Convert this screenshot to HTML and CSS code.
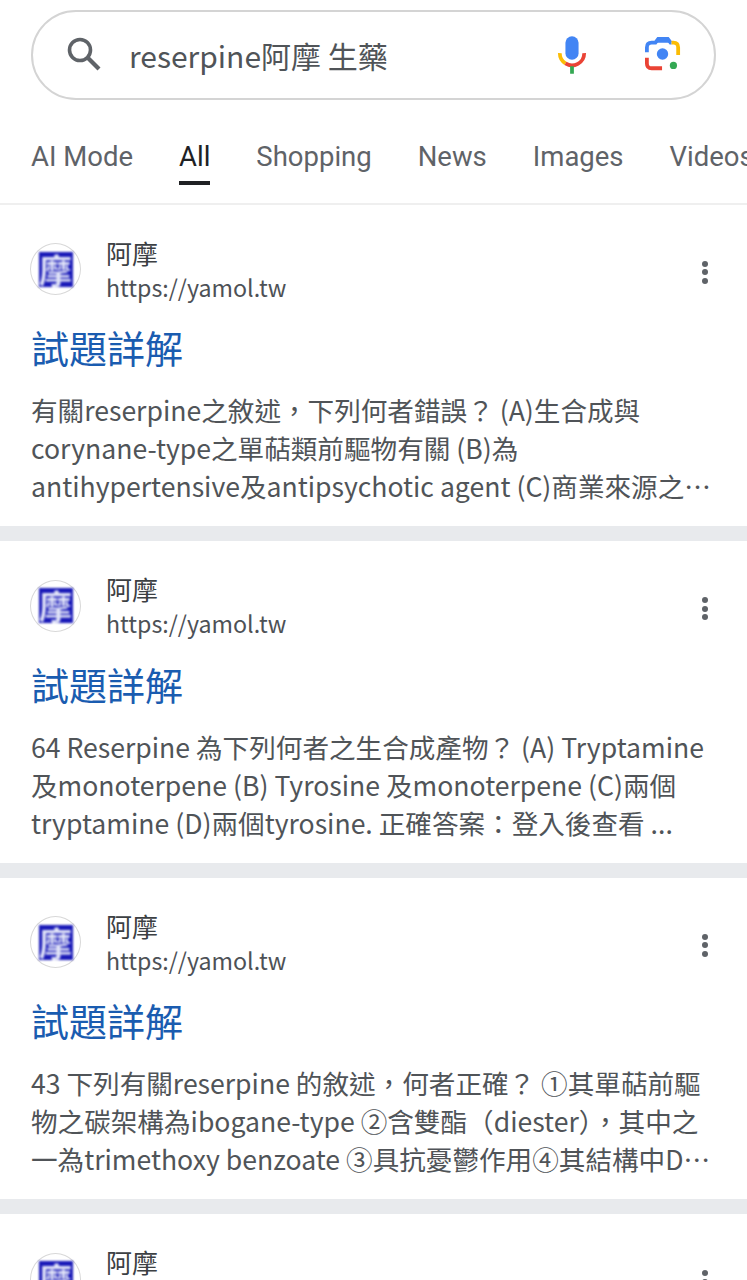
FILE: index.html
```html
<!DOCTYPE html>
<html lang="zh-Hant">
<head>
  <meta charset="utf-8">
  <title>reserpine阿摩 生藥</title>
  <link rel="stylesheet" href="styles.css">
</head>
<body>
  <header class="top">
    <div class="search">
      <svg class="search-icon" width="38" height="38" viewBox="0 0 38 38">
        <circle cx="14" cy="14" r="10.5" fill="none" stroke="#5f6368" stroke-width="3.6"/>
        <path d="M21.5 21.5 L33 33" stroke="#5f6368" stroke-width="4.2" fill="none"/>
      </svg>
      <span class="query">reserpine阿摩 生藥</span>
      <svg class="mic" width="30" height="40" viewBox="0 0 32 42">
        <rect x="9" y="1" width="14" height="25" rx="7" fill="#4285f4"/>
        <path d="M3 19 A13 13 0 0 0 9 30" fill="none" stroke="#fbbc04" stroke-width="4"/>
        <path d="M9 30 A13 13 0 0 0 29 19" fill="none" stroke="#ea4335" stroke-width="4"/>
        <rect x="14" y="33" width="4" height="8" fill="#34a853"/>
      </svg>
      <svg class="lens" width="36" height="36" viewBox="0 0 38 38">
        <path d="M2 16 V11 Q2 6 7 6 H11 L14 2 H24 L27 6 H28" fill="none" stroke="#4285f4" stroke-width="4"/>
        <path d="M14 2 H24 L27 6 H11 Z" fill="#4285f4"/>
        <path d="M28 6 H30 Q35 6 35 11 V19" fill="none" stroke="#fbbc04" stroke-width="4"/>
        <path d="M2 22 V28 Q2 33 7 33 H18" fill="none" stroke="#ea4335" stroke-width="4"/>
        <circle cx="18.500" cy="18" r="6" fill="#4285f4"/>
        <circle cx="30" cy="30" r="3.800" fill="#34a853"/>
      </svg>
    </div>
    <nav class="tabs">
      <a class="tab">AI Mode</a>
      <a class="tab active">All</a>
      <a class="tab">Shopping</a>
      <a class="tab">News</a>
      <a class="tab">Images</a>
      <a class="tab">Videos</a>
    </nav>
  </header>

  <main>
    <article class="result">
      <div class="site">
        <div class="favicon"><span class="fav-box">摩</span></div>
        <div class="site-text">
          <div class="site-name">阿摩</div>
          <div class="site-url">https://yamol.tw</div>
        </div>
        <div class="more"><i></i><i></i><i></i></div>
      </div>
      <h3 class="title">試題詳解</h3>
      <p class="snippet">有關reserpine之敘述，下列何者錯誤？ (A)生合成與<br>corynane-type之單萜類前驅物有關 (B)為<br>antihypertensive及antipsychotic agent (C)商業來源之⋯</p>
    </article>
    <article class="result">
      <div class="site">
        <div class="favicon"><span class="fav-box">摩</span></div>
        <div class="site-text">
          <div class="site-name">阿摩</div>
          <div class="site-url">https://yamol.tw</div>
        </div>
        <div class="more"><i></i><i></i><i></i></div>
      </div>
      <h3 class="title">試題詳解</h3>
      <p class="snippet">64 Reserpine 為下列何者之生合成產物？ (A) Tryptamine<br>及monoterpene (B) Tyrosine 及monoterpene (C)兩個<br>tryptamine (D)兩個tyrosine. 正確答案：登入後查看 ...</p>
    </article>
    <article class="result">
      <div class="site">
        <div class="favicon"><span class="fav-box">摩</span></div>
        <div class="site-text">
          <div class="site-name">阿摩</div>
          <div class="site-url">https://yamol.tw</div>
        </div>
        <div class="more"><i></i><i></i><i></i></div>
      </div>
      <h3 class="title">試題詳解</h3>
      <p class="snippet">43 下列有關reserpine 的敘述，何者正確？ ①其單萜前驅<br>物之碳架構為ibogane-type ②含雙酯（diester），其中之<br>一為trimethoxy benzoate ③具抗憂鬱作用④其結構中D⋯</p>
    </article>
    <article class="result last">
      <div class="site">
        <div class="favicon"><span class="fav-box">摩</span></div>
        <div class="site-text">
          <div class="site-name">阿摩</div>
          <div class="site-url">https://yamol.tw</div>
        </div>
        <div class="more"><i></i><i></i><i></i></div>
      </div>
    </article>
  </main>
</body>
</html>
```

FILE: styles.css
```css
html, body { margin: 0; padding: 0; }
body {
  width: 747px;
  height: 1280px;
  overflow: hidden;
  background: #fff;
  font-family: "Noto Sans CJK TC", "Noto Sans", sans-serif;
  color: #4d5156;
}

.top {
  padding-top: 10px;
  height: 192.600px;
  border-bottom: 2px solid #efefef;
  overflow: hidden;
}

.search {
  box-sizing: border-box;
  display: flex;
  align-items: center;
  margin: 0 31px;
  height: 90px;
  border: 2px solid #d4d4d4;
  border-radius: 45px;
  padding: 0 33px 0 33px;
}
.search-icon { flex: none; }
.query {
  flex: 1;
  margin-left: 25px;
  font-size: 30px;
  color: #505458;
}
.mic { flex: none; margin-right: 58px; }
.lens { flex: none; }

.tabs {
  display: flex;
  gap: 46px;
  padding: 37px 0 0 31px;
  white-space: nowrap;
}
.tab {
  position: relative;
  font-family: Roboto, "Noto Sans", sans-serif;
  font-size: 27.500px;
  line-height: 40px;
  color: #5f6368;
}
.tab.active { color: #202124; }
.tab.active::after {
  content: "";
  position: absolute;
  left: 0;
  right: 0;
  top: 44px;
  height: 4px;
  background: #202124;
}

.result {
  box-sizing: border-box;
  height: 336.500px;
  padding: 33.500px 31px 0;
  border-bottom: 15px solid #e8eaed;
}
.result.last { border-bottom: 0; }

.site { display: flex; align-items: center; height: 62px; }
.favicon {
  box-sizing: border-box;
  flex: none;
  width: 51px;
  height: 52px;
  margin-left: -1px;
  display: flex;
  align-items: center;
  justify-content: center;
  border: 1px solid #d8d8d8;
  border-radius: 50%;
  background: #fff;
}
.fav-box {
  width: 34px;
  height: 35px;
  display: block;
  background: #1a1ab8;
  color: #e2e5f8;
  font-size: 33px;
  line-height: 35px;
  text-align: center;
  font-weight: 700;
  filter: blur(0.8px);
}
.site-text { flex: 1; margin: 1px 0 0 25px; }
.site-name { font-size: 26px; line-height: 34px; color: #3c4043; }
.site-url { font-size: 23.200px; line-height: 34px; color: #4d5156; }
.more { display: flex; flex-direction: column; gap: 2.500px; margin: 6px 8px 0 0; }
.more i { display: block; width: 6px; height: 6px; border-radius: 50%; background: #5f6368; }

.title {
  margin: 19px 0 0;
  font-size: 38px;
  font-weight: 400;
  line-height: 56px;
  color: #1a5cb0;
}
.snippet {
  margin: 16px 0 0;
  font-size: 26.600px;
  line-height: 38px;
  white-space: nowrap;
  color: #505458;
}
```
